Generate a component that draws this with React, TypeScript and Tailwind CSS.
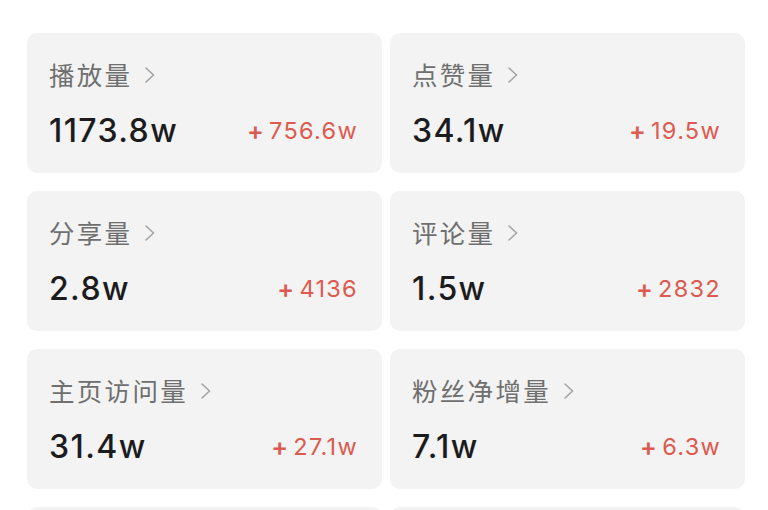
const stats = [
  { label: '播放量', value: '1173.8w', delta: '756.6w' },
  { label: '点赞量', value: '34.1w', delta: '19.5w' },
  { label: '分享量', value: '2.8w', delta: '4136' },
  { label: '评论量', value: '1.5w', delta: '2832' },
  { label: '主页访问量', value: '31.4w', delta: '27.1w' },
  { label: '粉丝净增量', value: '7.1w', delta: '6.3w' },
  { label: '', value: '', delta: '' },
  { label: '', value: '', delta: '' },
];

function Chevron() {
  return (
    <svg width="12" height="18" viewBox="0 0 12 18" fill="none" className="ml-[12px] mt-[1px]">
      <path d="M2 2 L9.5 9 L2 16" stroke="#a3a3a3" strokeWidth="1.6" strokeLinecap="round" strokeLinejoin="round" />
    </svg>
  );
}

function StatCard({ label, value, delta }: { label: string; value: string; delta: string }) {
  return (
    <div className="h-[140px] rounded-[10px] bg-[#f3f3f3] pl-[22px] pr-[24px] pt-[25px]">
      {label && (
        <div className="flex items-center h-[32px]">
          <span className="text-[25.5px] tracking-[2.3px] text-[#6f6f6f] font-['Noto_Sans_CJK_SC',sans-serif] leading-none">
            {label}
          </span>
          <Chevron />
        </div>
      )}
      {value && (
        <div className="mt-[25px] flex items-center justify-between font-['Inter','Liberation_Sans',sans-serif]">
          <span className="text-[32px] font-medium tracking-[1.4px] text-[#1c1c1e] leading-none">{value}</span>
          <span className="flex items-center text-[23.5px] tracking-[1.3px] text-[#dc5a4f] leading-none">
            <span className="font-semibold text-[25px] mr-[4px]">+</span>
            {delta}
          </span>
        </div>
      )}
    </div>
  );
}

export default function App() {
  return (
    <div className="w-[768px] h-[510px] overflow-hidden bg-white pt-[33px] pl-[27px] pr-[23px]">
      <div className="grid grid-cols-2 gap-x-[8px] gap-y-[18px]">
        {stats.map((s, i) => (
          <StatCard key={i} {...s} />
        ))}
      </div>
    </div>
  );
}
